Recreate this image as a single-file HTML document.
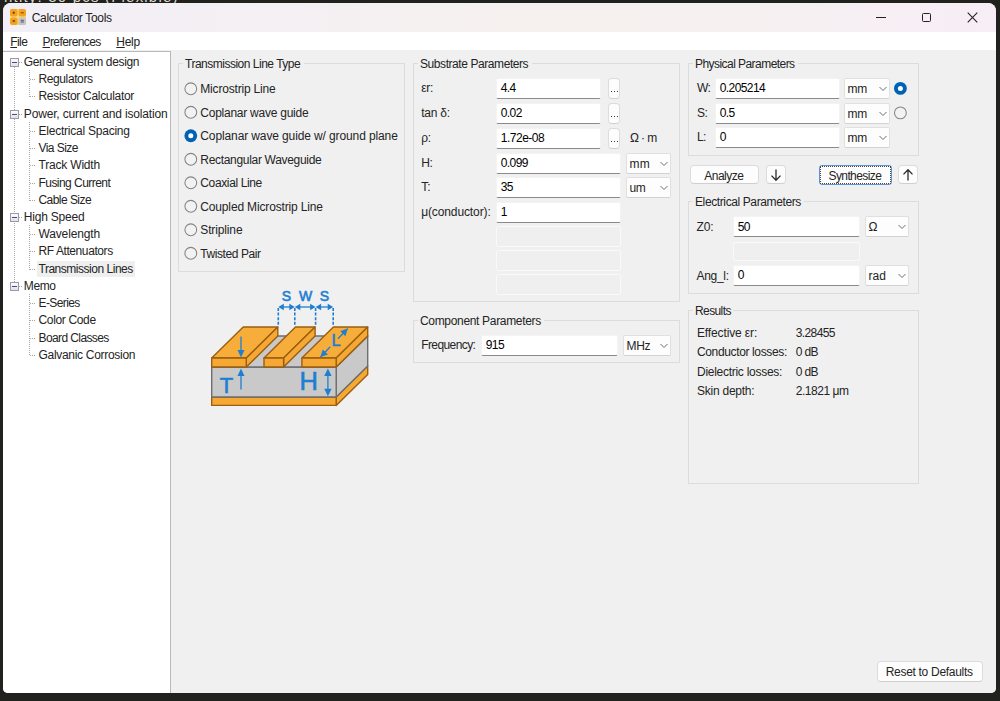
<!DOCTYPE html>
<html><head><meta charset="utf-8"><style>
html,body{margin:0;padding:0;}
body{width:1000px;height:701px;overflow:hidden;background:#21211e;position:relative;font-family:"Liberation Sans",sans-serif;}
.win{position:absolute;left:3px;top:3px;width:993px;height:690px;border-radius:8px 8px 5px 5px;overflow:hidden;background:#f0f0f0;}
.in{position:absolute;left:-3px;top:-3px;width:1000px;height:701px;}
.t{position:absolute;white-space:nowrap;line-height:1;font-family:"Liberation Sans",sans-serif;}
u{text-decoration:underline;text-underline-offset:1px;}
</style></head><body>
<div style="position:absolute;left:4px;top:-11px;font-family:'Liberation Sans',sans-serif;font-size:15px;line-height:1;color:#d8d8c8;white-space:nowrap;letter-spacing:1.2px">ntity: 30 pcs (Flexible)</div>
<div class="win"><div class="in">
<div style="position:absolute;left:0px;top:0px;width:1000.00px;height:32.00px;background:linear-gradient(90deg,#f2eff6 0%,#f4f0f3 30%,#f6f1ee 55%,#f6f0f1 75%,#f7eef6 100%);"></div>
<svg style="position:absolute;left:10px;top:9px" width="16" height="16" viewBox="0 0 16 16">
<rect x="0" y="0" width="16" height="16" rx="3" fill="#fbd77a"/>
<rect x="0" y="0" width="7.5" height="7.5" rx="2" fill="#f5a31f"/><rect x="8.5" y="0" width="7.5" height="7.5" rx="2" fill="#f5a31f"/>
<rect x="0" y="8.5" width="7.5" height="7.5" rx="2" fill="#f5a31f"/><rect x="8.5" y="8.5" width="7.5" height="7.5" rx="1.5" fill="#c4c4c4"/>
<path d="M2.5 3.8h2.5M3.75 2.5v2.5" stroke="#6e4300" stroke-width="1"/><path d="M10.8 3.8h3" stroke="#6e4300" stroke-width="1"/>
<path d="M2.6 10.9l2.3 2.3M4.9 10.9l-2.3 2.3" stroke="#6e4300" stroke-width="1"/><path d="M10.8 11.3h3M10.8 13h3" stroke="#555" stroke-width="1"/>
</svg>
<div class="t" style="left:31.70px;top:12px;font-size:12px;color:#1c1c1c;letter-spacing:-0.325px;">Calculator Tools</div>
<div style="position:absolute;left:876px;top:17px;width:10.00px;height:1.00px;background:#222;"></div>
<div style="position:absolute;left:922px;top:12.5px;width:9.00px;height:9.00px;border:1px solid #222;border-radius:1.5px;box-sizing:border-box;"></div>
<svg style="position:absolute;left:967px;top:12px" width="11" height="11"><path d="M0.7 0.7L10.3 10.3M10.3 0.7L0.7 10.3" stroke="#222" stroke-width="1.1"/></svg>
<div style="position:absolute;left:0px;top:32px;width:1000.00px;height:18.00px;background:#fff;"></div>
<div class="t" style="left:10.30px;top:36px;font-size:12px;color:#242424;letter-spacing:-0.600px;"><u>F</u>ile</div>
<div class="t" style="left:42.50px;top:36px;font-size:12px;color:#242424;letter-spacing:-0.590px;"><u>P</u>references</div>
<div class="t" style="left:116.30px;top:36px;font-size:12px;color:#242424;letter-spacing:-0.269px;"><u>H</u>elp</div>
<div style="position:absolute;left:0px;top:50px;width:1000.00px;height:651.00px;background:#f0f0f0;"></div>
<div style="position:absolute;left:3px;top:51px;width:168.00px;height:650.00px;background:#fff;border-top:1px solid #b9b9b9;border-right:1px solid #b9b9b9;box-sizing:border-box;"></div>
<div style="position:absolute;left:14px;top:62.5px;width:1.00px;height:223.86px;background-image:linear-gradient(#a8a8a8 50%, transparent 50%);background-size:1px 2px;"></div>
<div style="position:absolute;left:29px;top:70px;width:1.00px;height:27.00px;background-image:linear-gradient(#a8a8a8 50%, transparent 50%);background-size:1px 2px;"></div>
<div style="position:absolute;left:30px;top:79px;width:6.00px;height:1.00px;background-image:linear-gradient(90deg,#a8a8a8 50%, transparent 50%);background-size:2px 1px;"></div>
<div style="position:absolute;left:30px;top:96px;width:6.00px;height:1.00px;background-image:linear-gradient(90deg,#a8a8a8 50%, transparent 50%);background-size:2px 1px;"></div>
<div style="position:absolute;left:29px;top:122px;width:1.00px;height:79.00px;background-image:linear-gradient(#a8a8a8 50%, transparent 50%);background-size:1px 2px;"></div>
<div style="position:absolute;left:30px;top:131px;width:6.00px;height:1.00px;background-image:linear-gradient(90deg,#a8a8a8 50%, transparent 50%);background-size:2px 1px;"></div>
<div style="position:absolute;left:30px;top:148px;width:6.00px;height:1.00px;background-image:linear-gradient(90deg,#a8a8a8 50%, transparent 50%);background-size:2px 1px;"></div>
<div style="position:absolute;left:30px;top:165px;width:6.00px;height:1.00px;background-image:linear-gradient(90deg,#a8a8a8 50%, transparent 50%);background-size:2px 1px;"></div>
<div style="position:absolute;left:30px;top:183px;width:6.00px;height:1.00px;background-image:linear-gradient(90deg,#a8a8a8 50%, transparent 50%);background-size:2px 1px;"></div>
<div style="position:absolute;left:30px;top:200px;width:6.00px;height:1.00px;background-image:linear-gradient(90deg,#a8a8a8 50%, transparent 50%);background-size:2px 1px;"></div>
<div style="position:absolute;left:29px;top:225px;width:1.00px;height:45.00px;background-image:linear-gradient(#a8a8a8 50%, transparent 50%);background-size:1px 2px;"></div>
<div style="position:absolute;left:30px;top:234px;width:6.00px;height:1.00px;background-image:linear-gradient(90deg,#a8a8a8 50%, transparent 50%);background-size:2px 1px;"></div>
<div style="position:absolute;left:30px;top:251px;width:6.00px;height:1.00px;background-image:linear-gradient(90deg,#a8a8a8 50%, transparent 50%);background-size:2px 1px;"></div>
<div style="position:absolute;left:30px;top:269px;width:6.00px;height:1.00px;background-image:linear-gradient(90deg,#a8a8a8 50%, transparent 50%);background-size:2px 1px;"></div>
<div style="position:absolute;left:29px;top:294px;width:1.00px;height:62.00px;background-image:linear-gradient(#a8a8a8 50%, transparent 50%);background-size:1px 2px;"></div>
<div style="position:absolute;left:30px;top:303px;width:6.00px;height:1.00px;background-image:linear-gradient(90deg,#a8a8a8 50%, transparent 50%);background-size:2px 1px;"></div>
<div style="position:absolute;left:30px;top:320px;width:6.00px;height:1.00px;background-image:linear-gradient(90deg,#a8a8a8 50%, transparent 50%);background-size:2px 1px;"></div>
<div style="position:absolute;left:30px;top:338px;width:6.00px;height:1.00px;background-image:linear-gradient(90deg,#a8a8a8 50%, transparent 50%);background-size:2px 1px;"></div>
<div style="position:absolute;left:30px;top:355px;width:6.00px;height:1.00px;background-image:linear-gradient(90deg,#a8a8a8 50%, transparent 50%);background-size:2px 1px;"></div>
<div style="position:absolute;left:19px;top:62px;width:4.00px;height:1.00px;background-image:linear-gradient(90deg,#a8a8a8 50%, transparent 50%);background-size:2px 1px;"></div>
<div style="position:absolute;left:10px;top:58px;width:9.00px;height:9.00px;background:linear-gradient(#fdfdfd,#e0e0e6);border:1px solid #9a9aa8;box-sizing:border-box;"></div>
<div style="position:absolute;left:12px;top:62px;width:5.00px;height:1.00px;background:#4a4a8a;"></div>
<div class="t" style="left:23.80px;top:56px;font-size:12px;color:#242424;letter-spacing:-0.353px;">General system design</div>
<div class="t" style="left:38.50px;top:73px;font-size:12px;color:#242424;letter-spacing:-0.392px;">Regulators</div>
<div class="t" style="left:38.50px;top:90px;font-size:12px;color:#242424;letter-spacing:-0.310px;">Resistor Calculator</div>
<div style="position:absolute;left:19px;top:114px;width:4.00px;height:1.00px;background-image:linear-gradient(90deg,#a8a8a8 50%, transparent 50%);background-size:2px 1px;"></div>
<div style="position:absolute;left:10px;top:110px;width:9.00px;height:9.00px;background:linear-gradient(#fdfdfd,#e0e0e6);border:1px solid #9a9aa8;box-sizing:border-box;"></div>
<div style="position:absolute;left:12px;top:114px;width:5.00px;height:1.00px;background:#4a4a8a;"></div>
<div class="t" style="left:23.80px;top:108px;font-size:12px;color:#242424;letter-spacing:-0.156px;">Power, current and isolation</div>
<div class="t" style="left:38.50px;top:125px;font-size:12px;color:#242424;letter-spacing:-0.230px;">Electrical Spacing</div>
<div class="t" style="left:38.50px;top:142px;font-size:12px;color:#242424;letter-spacing:-0.547px;">Via Size</div>
<div class="t" style="left:38.50px;top:159px;font-size:12px;color:#242424;letter-spacing:-0.189px;">Track Width</div>
<div class="t" style="left:38.50px;top:177px;font-size:12px;color:#242424;letter-spacing:-0.549px;">Fusing Current</div>
<div class="t" style="left:38.50px;top:194px;font-size:12px;color:#242424;letter-spacing:-0.551px;">Cable Size</div>
<div style="position:absolute;left:19px;top:217px;width:4.00px;height:1.00px;background-image:linear-gradient(90deg,#a8a8a8 50%, transparent 50%);background-size:2px 1px;"></div>
<div style="position:absolute;left:10px;top:213px;width:9.00px;height:9.00px;background:linear-gradient(#fdfdfd,#e0e0e6);border:1px solid #9a9aa8;box-sizing:border-box;"></div>
<div style="position:absolute;left:12px;top:217px;width:5.00px;height:1.00px;background:#4a4a8a;"></div>
<div class="t" style="left:23.80px;top:211px;font-size:12px;color:#242424;letter-spacing:-0.215px;">High Speed</div>
<div class="t" style="left:38.50px;top:228px;font-size:12px;color:#242424;letter-spacing:-0.150px;">Wavelength</div>
<div class="t" style="left:38.50px;top:245px;font-size:12px;color:#242424;letter-spacing:-0.415px;">RF Attenuators</div>
<div style="position:absolute;left:37px;top:260.64px;width:98.00px;height:16.00px;background:#efefef;"></div>
<div class="t" style="left:38.50px;top:263px;font-size:12px;color:#242424;letter-spacing:-0.478px;">Transmission Lines</div>
<div style="position:absolute;left:19px;top:286px;width:4.00px;height:1.00px;background-image:linear-gradient(90deg,#a8a8a8 50%, transparent 50%);background-size:2px 1px;"></div>
<div style="position:absolute;left:10px;top:282px;width:9.00px;height:9.00px;background:linear-gradient(#fdfdfd,#e0e0e6);border:1px solid #9a9aa8;box-sizing:border-box;"></div>
<div style="position:absolute;left:12px;top:286px;width:5.00px;height:1.00px;background:#4a4a8a;"></div>
<div class="t" style="left:23.80px;top:280px;font-size:12px;color:#242424;letter-spacing:-0.389px;">Memo</div>
<div class="t" style="left:38.50px;top:297px;font-size:12px;color:#242424;letter-spacing:-0.600px;">E-Series</div>
<div class="t" style="left:38.50px;top:314px;font-size:12px;color:#242424;letter-spacing:-0.347px;">Color Code</div>
<div class="t" style="left:38.50px;top:332px;font-size:12px;color:#242424;letter-spacing:-0.600px;">Board Classes</div>
<div class="t" style="left:38.50px;top:349px;font-size:12px;color:#242424;letter-spacing:-0.298px;">Galvanic Corrosion</div>
<div style="position:absolute;left:178px;top:63px;width:227.00px;height:209.00px;border:1px solid #dcdcdc;box-sizing:border-box;"></div>
<div style="position:absolute;left:183px;top:62px;width:121.20px;height:3.00px;background:#f0f0f0;"></div>
<div class="t" style="left:185.00px;top:58px;font-size:12px;color:#242424;letter-spacing:-0.495px;">Transmission Line Type</div>
<svg style="position:absolute;left:182px;top:80px" width="16" height="16"><circle cx="8.80" cy="8.75" r="5.9" fill="#f2f2f2" stroke="#858585" stroke-width="1.05"/></svg>
<div class="t" style="left:200.30px;top:83px;font-size:12px;color:#242424;letter-spacing:-0.189px;">Microstrip Line</div>
<svg style="position:absolute;left:182px;top:104px" width="16" height="16"><circle cx="8.80" cy="8.25" r="5.9" fill="#f2f2f2" stroke="#858585" stroke-width="1.05"/></svg>
<div class="t" style="left:200.30px;top:107px;font-size:12px;color:#242424;letter-spacing:-0.248px;">Coplanar wave guide</div>
<svg style="position:absolute;left:182px;top:127px" width="16" height="16"><circle cx="8.80" cy="8.75" r="6.4" fill="#0062b5"/><circle cx="8.80" cy="8.75" r="2.5" fill="#fff"/></svg>
<div class="t" style="left:200.30px;top:130px;font-size:12px;color:#242424;letter-spacing:-0.115px;">Coplanar wave guide w/ ground plane</div>
<svg style="position:absolute;left:182px;top:151px" width="16" height="16"><circle cx="8.80" cy="8.25" r="5.9" fill="#f2f2f2" stroke="#858585" stroke-width="1.05"/></svg>
<div class="t" style="left:200.30px;top:154px;font-size:12px;color:#242424;letter-spacing:-0.313px;">Rectangular Waveguide</div>
<svg style="position:absolute;left:182px;top:174px" width="16" height="16"><circle cx="8.80" cy="8.75" r="5.9" fill="#f2f2f2" stroke="#858585" stroke-width="1.05"/></svg>
<div class="t" style="left:200.30px;top:177px;font-size:12px;color:#242424;letter-spacing:-0.370px;">Coaxial Line</div>
<svg style="position:absolute;left:182px;top:198px" width="16" height="16"><circle cx="8.80" cy="8.25" r="5.9" fill="#f2f2f2" stroke="#858585" stroke-width="1.05"/></svg>
<div class="t" style="left:200.30px;top:201px;font-size:12px;color:#242424;letter-spacing:-0.154px;">Coupled Microstrip Line</div>
<svg style="position:absolute;left:182px;top:221px" width="16" height="16"><circle cx="8.80" cy="8.75" r="5.9" fill="#f2f2f2" stroke="#858585" stroke-width="1.05"/></svg>
<div class="t" style="left:200.30px;top:224px;font-size:12px;color:#242424;letter-spacing:-0.135px;">Stripline</div>
<svg style="position:absolute;left:182px;top:245px" width="16" height="16"><circle cx="8.80" cy="8.25" r="5.9" fill="#f2f2f2" stroke="#858585" stroke-width="1.05"/></svg>
<div class="t" style="left:200.30px;top:248px;font-size:12px;color:#242424;letter-spacing:-0.424px;">Twisted Pair</div>
<svg style="position:absolute;left:200px;top:280px" width="180" height="135" viewBox="200 280 180 135"><polygon points="336.20,397.00 367.70,366.00 367.70,374.40 336.20,405.40" fill="#f5a833" stroke="#9b5e10" stroke-width="1.4" stroke-linejoin="round"/><polygon points="211.70,397.00 336.20,397.00 336.20,405.40 211.70,405.40" fill="#f5a833" stroke="#9b5e10" stroke-width="1.4" stroke-linejoin="round"/><polygon points="336.20,367.00 367.70,336.00 367.70,366.00 336.20,397.00" fill="#c9c9c9" stroke="#6e6e6e" stroke-width="1.4" stroke-linejoin="round"/><polygon points="211.70,367.00 336.20,367.00 336.20,397.00 211.70,397.00" fill="#c9c9c9" stroke="#6e6e6e" stroke-width="1.4" stroke-linejoin="round"/><polygon points="211.70,367.00 243.20,336.00 367.70,336.00 336.20,367.00" fill="#c9c9c9" stroke="#6e6e6e" stroke-width="1.4" stroke-linejoin="round"/><polygon points="211.70,358.00 243.20,327.00 277.80,327.00 246.30,358.00" fill="#f7ad3a" stroke="#9b5e10" stroke-width="1.4" stroke-linejoin="round"/><polygon points="246.30,358.00 277.80,327.00 277.80,336.00 246.30,367.00" fill="#f5a833" stroke="#9b5e10" stroke-width="1.4" stroke-linejoin="round"/><polygon points="211.70,358.00 246.30,358.00 246.30,367.00 211.70,367.00" fill="#f5a833" stroke="#9b5e10" stroke-width="1.4" stroke-linejoin="round"/><polygon points="264.00,358.00 295.50,327.00 315.10,327.00 283.60,358.00" fill="#f7ad3a" stroke="#9b5e10" stroke-width="1.4" stroke-linejoin="round"/><polygon points="283.60,358.00 315.10,327.00 315.10,336.00 283.60,367.00" fill="#f5a833" stroke="#9b5e10" stroke-width="1.4" stroke-linejoin="round"/><polygon points="264.00,358.00 283.60,358.00 283.60,367.00 264.00,367.00" fill="#f5a833" stroke="#9b5e10" stroke-width="1.4" stroke-linejoin="round"/><polygon points="301.90,358.00 333.40,327.00 367.70,327.00 336.20,358.00" fill="#f7ad3a" stroke="#9b5e10" stroke-width="1.4" stroke-linejoin="round"/><polygon points="336.20,358.00 367.70,327.00 367.70,336.00 336.20,367.00" fill="#f5a833" stroke="#9b5e10" stroke-width="1.4" stroke-linejoin="round"/><polygon points="301.90,358.00 336.20,358.00 336.20,367.00 301.90,367.00" fill="#f5a833" stroke="#9b5e10" stroke-width="1.4" stroke-linejoin="round"/><line x1="278.3" y1="308" x2="278.3" y2="326.5" stroke="#1e7fd2" stroke-width="1.6" stroke-dasharray="3 1.6"/><line x1="294.8" y1="308" x2="294.8" y2="326.5" stroke="#1e7fd2" stroke-width="1.6" stroke-dasharray="3 1.6"/><line x1="315.6" y1="308" x2="315.6" y2="326.5" stroke="#1e7fd2" stroke-width="1.6" stroke-dasharray="3 1.6"/><line x1="333.2" y1="308" x2="333.2" y2="326.5" stroke="#1e7fd2" stroke-width="1.6" stroke-dasharray="3 1.6"/><line x1="282.3" y1="307" x2="290.8" y2="307" stroke="#1e7fd2" stroke-width="1.3"/><polygon points="278.3,307 283.8,303.8 283.8,310.2" fill="#1e7fd2"/><polygon points="294.8,307 289.3,303.8 289.3,310.2" fill="#1e7fd2"/><line x1="298.8" y1="307" x2="311.6" y2="307" stroke="#1e7fd2" stroke-width="1.3"/><polygon points="294.8,307 300.3,303.8 300.3,310.2" fill="#1e7fd2"/><polygon points="315.6,307 310.1,303.8 310.1,310.2" fill="#1e7fd2"/><line x1="319.6" y1="307" x2="329.2" y2="307" stroke="#1e7fd2" stroke-width="1.3"/><polygon points="315.6,307 321.1,303.8 321.1,310.2" fill="#1e7fd2"/><polygon points="333.2,307 327.7,303.8 327.7,310.2" fill="#1e7fd2"/><text x="286.5" y="301.3" font-family="Liberation Sans" font-size="14" fill="#1e7fd2" stroke="#1e7fd2" stroke-width="0.6" text-anchor="middle">S</text><text x="305.6" y="301.3" font-family="Liberation Sans" font-size="14" fill="#1e7fd2" stroke="#1e7fd2" stroke-width="0.6" text-anchor="middle">W</text><text x="324.4" y="301.3" font-family="Liberation Sans" font-size="14" fill="#1e7fd2" stroke="#1e7fd2" stroke-width="0.6" text-anchor="middle">S</text><text x="226.5" y="393.2" font-family="Liberation Sans" font-size="22" fill="#1e7fd2" stroke="#1e7fd2" stroke-width="0.6" text-anchor="middle">T</text><text x="308.6" y="390.4" font-family="Liberation Sans" font-size="25.5" fill="#1e7fd2" stroke="#1e7fd2" stroke-width="0.6" text-anchor="middle">H</text><text x="336" y="345.9" font-family="Liberation Sans" font-size="16.5" fill="#1e7fd2" stroke="#1e7fd2" stroke-width="0.6" text-anchor="middle">L</text><line x1="241" y1="336.5" x2="241" y2="351" stroke="#1e7fd2" stroke-width="1.3"/><polygon points="241,357.5 237.5,350 244.5,350" fill="#1e7fd2"/><line x1="241" y1="374" x2="241" y2="389.5" stroke="#1e7fd2" stroke-width="1.3"/><polygon points="241,368.5 237.5,376 244.5,376" fill="#1e7fd2"/><line x1="327.9" y1="374" x2="327.9" y2="390" stroke="#1e7fd2" stroke-width="1.3"/><polygon points="327.9,368.5 324.2,376 331.6,376" fill="#1e7fd2"/><polygon points="327.9,396.3 324.2,388.8 331.6,388.8" fill="#1e7fd2"/><line x1="320.5" y1="357" x2="330.29" y2="346.78" stroke="#1e7fd2" stroke-width="1.3"/><line x1="337.91" y1="338.82" x2="347.7" y2="328.6" stroke="#1e7fd2" stroke-width="1.3"/><polygon points="347.70,328.60 345.46,336.15 340.26,331.17" fill="#1e7fd2"/><polygon points="320.50,357.00 322.74,349.45 327.94,354.43" fill="#1e7fd2"/></svg>
<div style="position:absolute;left:413px;top:63px;width:267.00px;height:239.00px;border:1px solid #dcdcdc;box-sizing:border-box;"></div>
<div style="position:absolute;left:418px;top:62px;width:113.60px;height:3.00px;background:#f0f0f0;"></div>
<div class="t" style="left:420.00px;top:58px;font-size:12px;color:#242424;letter-spacing:-0.427px;">Substrate Parameters</div>
<div class="t" style="left:421.20px;top:82px;font-size:12px;color:#242424;letter-spacing:-0.273px;">εr:</div>
<div style="position:absolute;left:496px;top:78px;width:105.00px;height:21.00px;background:#fff;border:1px solid #f3f3f3;border-bottom:1px solid #8a8a8a;box-sizing:border-box;border-radius:2px;"></div>
<div class="t" style="left:500.80px;top:82px;font-size:12px;color:#000;letter-spacing:-0.600px;">4.4</div>
<div style="position:absolute;left:608px;top:78px;width:12.00px;height:21.00px;background:#fdfdfd;border:1px solid #dcdcdc;border-bottom-color:#cfcfcf;box-sizing:border-box;border-radius:4px;"></div>
<div style="position:absolute;left:610.5px;top:91px;width:1.00px;height:1.00px;background:#3a3a3a;"></div>
<div style="position:absolute;left:613.5px;top:91px;width:1.00px;height:1.00px;background:#3a3a3a;"></div>
<div style="position:absolute;left:616.5px;top:91px;width:1.00px;height:1.00px;background:#3a3a3a;"></div>
<div class="t" style="left:421.20px;top:107px;font-size:12px;color:#242424;letter-spacing:-0.219px;">tan δ:</div>
<div style="position:absolute;left:496px;top:103px;width:105.00px;height:21.00px;background:#fff;border:1px solid #f3f3f3;border-bottom:1px solid #8a8a8a;box-sizing:border-box;border-radius:2px;"></div>
<div class="t" style="left:500.80px;top:107px;font-size:12px;color:#000;letter-spacing:-0.600px;">0.02</div>
<div style="position:absolute;left:608px;top:103px;width:12.00px;height:21.00px;background:#fdfdfd;border:1px solid #dcdcdc;border-bottom-color:#cfcfcf;box-sizing:border-box;border-radius:4px;"></div>
<div style="position:absolute;left:610.5px;top:116px;width:1.00px;height:1.00px;background:#3a3a3a;"></div>
<div style="position:absolute;left:613.5px;top:116px;width:1.00px;height:1.00px;background:#3a3a3a;"></div>
<div style="position:absolute;left:616.5px;top:116px;width:1.00px;height:1.00px;background:#3a3a3a;"></div>
<div class="t" style="left:421.20px;top:132px;font-size:12px;color:#242424;letter-spacing:-0.226px;">ρ:</div>
<div style="position:absolute;left:496px;top:128px;width:105.00px;height:21.00px;background:#fff;border:1px solid #f3f3f3;border-bottom:1px solid #8a8a8a;box-sizing:border-box;border-radius:2px;"></div>
<div class="t" style="left:500.80px;top:132px;font-size:12px;color:#000;letter-spacing:-0.500px;">1.72e-08</div>
<div style="position:absolute;left:608px;top:128px;width:12.00px;height:21.00px;background:#fdfdfd;border:1px solid #dcdcdc;border-bottom-color:#cfcfcf;box-sizing:border-box;border-radius:4px;"></div>
<div style="position:absolute;left:610.5px;top:141px;width:1.00px;height:1.00px;background:#3a3a3a;"></div>
<div style="position:absolute;left:613.5px;top:141px;width:1.00px;height:1.00px;background:#3a3a3a;"></div>
<div style="position:absolute;left:616.5px;top:141px;width:1.00px;height:1.00px;background:#3a3a3a;"></div>
<div class="t" style="left:421.20px;top:157px;font-size:12px;color:#242424;letter-spacing:-0.466px;">H:</div>
<div style="position:absolute;left:496px;top:153px;width:125.00px;height:21.00px;background:#fff;border:1px solid #f3f3f3;border-bottom:1px solid #8a8a8a;box-sizing:border-box;border-radius:2px;"></div>
<div class="t" style="left:500.80px;top:157px;font-size:12px;color:#000;letter-spacing:-0.600px;">0.099</div>
<div style="position:absolute;left:626px;top:153px;width:45.00px;height:21.00px;background:#fdfdfd;border:1px solid #e0e0e0;border-bottom-color:#d2d2d2;box-sizing:border-box;border-radius:2px;"></div>
<div class="t" style="left:629.50px;top:158px;font-size:12px;color:#242424;letter-spacing:0.204px;">mm</div>
<svg style="position:absolute;left:658.5px;top:161.0px" width="10" height="6"><path d="M1.5 1 L5 4.5 L8.5 1" fill="none" stroke="#6f6f6f" stroke-width="1"/></svg>
<div class="t" style="left:421.20px;top:181px;font-size:12px;color:#242424;">T:</div>
<div style="position:absolute;left:496px;top:177px;width:125.00px;height:21.00px;background:#fff;border:1px solid #f3f3f3;border-bottom:1px solid #8a8a8a;box-sizing:border-box;border-radius:2px;"></div>
<div class="t" style="left:500.80px;top:181px;font-size:12px;color:#000;letter-spacing:-0.600px;">35</div>
<div style="position:absolute;left:626px;top:177px;width:45.00px;height:21.00px;background:#fdfdfd;border:1px solid #e0e0e0;border-bottom-color:#d2d2d2;box-sizing:border-box;border-radius:2px;"></div>
<div class="t" style="left:629.50px;top:182px;font-size:12px;color:#242424;letter-spacing:-0.374px;">um</div>
<svg style="position:absolute;left:658.5px;top:185.0px" width="10" height="6"><path d="M1.5 1 L5 4.5 L8.5 1" fill="none" stroke="#6f6f6f" stroke-width="1"/></svg>
<div class="t" style="left:421.20px;top:206px;font-size:12px;color:#242424;letter-spacing:-0.117px;">μ(conductor):</div>
<div style="position:absolute;left:496px;top:202px;width:125.00px;height:21.00px;background:#fff;border:1px solid #f3f3f3;border-bottom:1px solid #8a8a8a;box-sizing:border-box;border-radius:2px;"></div>
<div class="t" style="left:500.80px;top:206px;font-size:12px;color:#000;">1</div>
<div class="t" style="left:629.90px;top:132px;font-size:12px;color:#242424;letter-spacing:-0.600px;">Ω · m</div>
<div style="position:absolute;left:496px;top:226px;width:125.00px;height:21.00px;background:#efefef;border:1px solid #f9f9f9;box-sizing:border-box;border-radius:2px;"></div>
<div style="position:absolute;left:496px;top:250px;width:125.00px;height:21.00px;background:#efefef;border:1px solid #f9f9f9;box-sizing:border-box;border-radius:2px;"></div>
<div style="position:absolute;left:496px;top:274px;width:125.00px;height:21.00px;background:#efefef;border:1px solid #f9f9f9;box-sizing:border-box;border-radius:2px;"></div>
<div style="position:absolute;left:413px;top:320px;width:267.00px;height:43.00px;border:1px solid #dcdcdc;box-sizing:border-box;"></div>
<div style="position:absolute;left:418px;top:319px;width:126.20px;height:3.00px;background:#f0f0f0;"></div>
<div class="t" style="left:420.00px;top:315px;font-size:12px;color:#242424;letter-spacing:-0.326px;">Component Parameters</div>
<div class="t" style="left:421.20px;top:339px;font-size:12px;color:#242424;letter-spacing:-0.588px;">Frequency:</div>
<div style="position:absolute;left:481px;top:335px;width:137.00px;height:21.00px;background:#fff;border:1px solid #f3f3f3;border-bottom:1px solid #8a8a8a;box-sizing:border-box;border-radius:2px;"></div>
<div class="t" style="left:485.80px;top:339px;font-size:12px;color:#000;letter-spacing:-0.600px;">915</div>
<div style="position:absolute;left:623px;top:335px;width:48.00px;height:21.00px;background:#fdfdfd;border:1px solid #e0e0e0;border-bottom-color:#d2d2d2;box-sizing:border-box;border-radius:2px;"></div>
<div class="t" style="left:626.50px;top:340px;font-size:12px;color:#242424;letter-spacing:-0.281px;">MHz</div>
<svg style="position:absolute;left:658.5px;top:343.0px" width="10" height="6"><path d="M1.5 1 L5 4.5 L8.5 1" fill="none" stroke="#6f6f6f" stroke-width="1"/></svg>
<div style="position:absolute;left:688px;top:63px;width:231.00px;height:93.00px;border:1px solid #dcdcdc;box-sizing:border-box;"></div>
<div style="position:absolute;left:693px;top:62px;width:105.10px;height:3.00px;background:#f0f0f0;"></div>
<div class="t" style="left:695.00px;top:58px;font-size:12px;color:#242424;letter-spacing:-0.552px;">Physical Parameters</div>
<div class="t" style="left:697.00px;top:82px;font-size:12px;color:#242424;letter-spacing:-0.600px;">W:</div>
<div style="position:absolute;left:715px;top:78px;width:125.00px;height:21.00px;background:#fff;border:1px solid #f3f3f3;border-bottom:1px solid #8a8a8a;box-sizing:border-box;border-radius:2px;"></div>
<div class="t" style="left:719.80px;top:82px;font-size:12px;color:#000;letter-spacing:-0.600px;">0.205214</div>
<div style="position:absolute;left:844px;top:78px;width:46.00px;height:21.00px;background:#fdfdfd;border:1px solid #e0e0e0;border-bottom-color:#d2d2d2;box-sizing:border-box;border-radius:2px;"></div>
<div class="t" style="left:847.50px;top:83px;font-size:12px;color:#242424;letter-spacing:-0.296px;">mm</div>
<svg style="position:absolute;left:877.5px;top:86.0px" width="10" height="6"><path d="M1.5 1 L5 4.5 L8.5 1" fill="none" stroke="#6f6f6f" stroke-width="1"/></svg>
<div class="t" style="left:697.00px;top:107px;font-size:12px;color:#242424;letter-spacing:-0.600px;">S:</div>
<div style="position:absolute;left:715px;top:103px;width:125.00px;height:21.00px;background:#fff;border:1px solid #f3f3f3;border-bottom:1px solid #8a8a8a;box-sizing:border-box;border-radius:2px;"></div>
<div class="t" style="left:719.80px;top:107px;font-size:12px;color:#000;letter-spacing:-0.600px;">0.5</div>
<div style="position:absolute;left:844px;top:103px;width:46.00px;height:21.00px;background:#fdfdfd;border:1px solid #e0e0e0;border-bottom-color:#d2d2d2;box-sizing:border-box;border-radius:2px;"></div>
<div class="t" style="left:847.50px;top:108px;font-size:12px;color:#242424;letter-spacing:-0.296px;">mm</div>
<svg style="position:absolute;left:877.5px;top:111.0px" width="10" height="6"><path d="M1.5 1 L5 4.5 L8.5 1" fill="none" stroke="#6f6f6f" stroke-width="1"/></svg>
<div class="t" style="left:697.00px;top:131px;font-size:12px;color:#242424;letter-spacing:-0.600px;">L:</div>
<div style="position:absolute;left:715px;top:127px;width:125.00px;height:21.00px;background:#fff;border:1px solid #f3f3f3;border-bottom:1px solid #8a8a8a;box-sizing:border-box;border-radius:2px;"></div>
<div class="t" style="left:719.80px;top:131px;font-size:12px;color:#000;">0</div>
<div style="position:absolute;left:844px;top:127px;width:46.00px;height:21.00px;background:#fdfdfd;border:1px solid #e0e0e0;border-bottom-color:#d2d2d2;box-sizing:border-box;border-radius:2px;"></div>
<div class="t" style="left:847.50px;top:132px;font-size:12px;color:#242424;letter-spacing:-0.296px;">mm</div>
<svg style="position:absolute;left:877.5px;top:135.0px" width="10" height="6"><path d="M1.5 1 L5 4.5 L8.5 1" fill="none" stroke="#6f6f6f" stroke-width="1"/></svg>
<svg style="position:absolute;left:892px;top:80px" width="16" height="16"><circle cx="8.40" cy="8.40" r="6.4" fill="#0062b5"/><circle cx="8.40" cy="8.40" r="2.5" fill="#fff"/></svg>
<svg style="position:absolute;left:892px;top:104px" width="16" height="16"><circle cx="8.40" cy="8.90" r="5.9" fill="#f2f2f2" stroke="#858585" stroke-width="1.05"/></svg>
<div style="position:absolute;left:690px;top:165px;width:69.00px;height:19.00px;background:#fdfdfd;border:1px solid #dcdcdc;border-bottom-color:#cfcfcf;box-sizing:border-box;border-radius:4px;"></div>
<div class="t" style="left:704.20px;top:170px;font-size:12px;color:#242424;letter-spacing:-0.486px;">Analyze</div>
<div style="position:absolute;left:766px;top:165px;width:20.00px;height:19.00px;background:#fdfdfd;border:1px solid #dcdcdc;border-bottom-color:#cfcfcf;box-sizing:border-box;border-radius:4px;"></div>
<svg style="position:absolute;left:770px;top:168px" width="12" height="14"><path d="M6 1.5V12.2M1.5 7.6L6 12.2L10.5 7.6" fill="none" stroke="#2a2a2a" stroke-width="1.3"/></svg>
<div style="position:absolute;left:819px;top:165px;width:73.00px;height:20.00px;background:#fdfdfd;border:1px solid #5e94d6;box-sizing:border-box;border-radius:3px;"></div>
<div style="position:absolute;left:820px;top:166px;width:71.00px;height:18.00px;border:1px dotted #444;box-sizing:border-box;"></div>
<div class="t" style="left:828.50px;top:170px;font-size:12px;color:#242424;letter-spacing:-0.600px;">Synthesize</div>
<div style="position:absolute;left:898px;top:165px;width:20.00px;height:19.00px;background:#fdfdfd;border:1px solid #dcdcdc;border-bottom-color:#cfcfcf;box-sizing:border-box;border-radius:4px;"></div>
<svg style="position:absolute;left:902px;top:168px" width="12" height="14"><path d="M6 12.5V1.8M1.5 6.4L6 1.8L10.5 6.4" fill="none" stroke="#2a2a2a" stroke-width="1.3"/></svg>
<div style="position:absolute;left:688px;top:201px;width:231.00px;height:93.00px;border:1px solid #dcdcdc;box-sizing:border-box;"></div>
<div style="position:absolute;left:693px;top:200px;width:111.30px;height:3.00px;background:#f0f0f0;"></div>
<div class="t" style="left:695.00px;top:196px;font-size:12px;color:#242424;letter-spacing:-0.387px;">Electrical Parameters</div>
<div class="t" style="left:696.50px;top:221px;font-size:12px;color:#242424;letter-spacing:-0.102px;">Z0:</div>
<div style="position:absolute;left:733px;top:216px;width:127.00px;height:21.00px;background:#fff;border:1px solid #f3f3f3;border-bottom:1px solid #8a8a8a;box-sizing:border-box;border-radius:2px;"></div>
<div class="t" style="left:737.80px;top:221px;font-size:12px;color:#000;letter-spacing:-0.600px;">50</div>
<div style="position:absolute;left:865px;top:216px;width:44.00px;height:21.00px;background:#fdfdfd;border:1px solid #e0e0e0;border-bottom-color:#d2d2d2;box-sizing:border-box;border-radius:2px;"></div>
<div class="t" style="left:868.50px;top:221px;font-size:12px;color:#242424;">Ω</div>
<svg style="position:absolute;left:896.5px;top:224.0px" width="10" height="6"><path d="M1.5 1 L5 4.5 L8.5 1" fill="none" stroke="#6f6f6f" stroke-width="1"/></svg>
<div style="position:absolute;left:733px;top:242px;width:127.00px;height:19.00px;background:#efefef;border:1px solid #f9f9f9;box-sizing:border-box;border-radius:2px;"></div>
<div class="t" style="left:696.50px;top:270px;font-size:12px;color:#242424;letter-spacing:-0.298px;">Ang_l:</div>
<div style="position:absolute;left:733px;top:265px;width:127.00px;height:21.00px;background:#fff;border:1px solid #f3f3f3;border-bottom:1px solid #8a8a8a;box-sizing:border-box;border-radius:2px;"></div>
<div class="t" style="left:737.80px;top:269px;font-size:12px;color:#000;">0</div>
<div style="position:absolute;left:865px;top:265px;width:44.00px;height:21.00px;background:#fdfdfd;border:1px solid #e0e0e0;border-bottom-color:#d2d2d2;box-sizing:border-box;border-radius:2px;"></div>
<div class="t" style="left:868.50px;top:270px;font-size:12px;color:#242424;letter-spacing:0.065px;">rad</div>
<svg style="position:absolute;left:896.5px;top:273.0px" width="10" height="6"><path d="M1.5 1 L5 4.5 L8.5 1" fill="none" stroke="#6f6f6f" stroke-width="1"/></svg>
<div style="position:absolute;left:688px;top:310px;width:231.00px;height:174.00px;border:1px solid #dcdcdc;box-sizing:border-box;"></div>
<div style="position:absolute;left:693px;top:309px;width:40.40px;height:3.00px;background:#f0f0f0;"></div>
<div class="t" style="left:695.00px;top:305px;font-size:12px;color:#242424;letter-spacing:-0.600px;">Results</div>
<div class="t" style="left:697.00px;top:327px;font-size:12px;color:#242424;letter-spacing:-0.132px;">Effective εr:</div>
<div class="t" style="left:795.70px;top:327px;font-size:12px;color:#242424;letter-spacing:-0.600px;">3.28455</div>
<div class="t" style="left:697.00px;top:346px;font-size:12px;color:#242424;letter-spacing:-0.363px;">Conductor losses:</div>
<div class="t" style="left:795.70px;top:346px;font-size:12px;color:#242424;letter-spacing:-0.600px;">0 dB</div>
<div class="t" style="left:697.00px;top:366px;font-size:12px;color:#242424;letter-spacing:-0.276px;">Dielectric losses:</div>
<div class="t" style="left:795.70px;top:366px;font-size:12px;color:#242424;letter-spacing:-0.600px;">0 dB</div>
<div class="t" style="left:697.00px;top:385px;font-size:12px;color:#242424;letter-spacing:-0.241px;">Skin depth:</div>
<div class="t" style="left:795.70px;top:385px;font-size:12px;color:#242424;letter-spacing:-0.444px;">2.1821 μm</div>
<div style="position:absolute;left:876.7px;top:661px;width:106.30px;height:20.50px;background:#fdfdfd;border:1px solid #dcdcdc;border-bottom-color:#cfcfcf;box-sizing:border-box;border-radius:4px;"></div>
<div class="t" style="left:885.70px;top:666px;font-size:12px;color:#242424;letter-spacing:-0.297px;">Reset to Defaults</div>
</div></div>
</body></html>
